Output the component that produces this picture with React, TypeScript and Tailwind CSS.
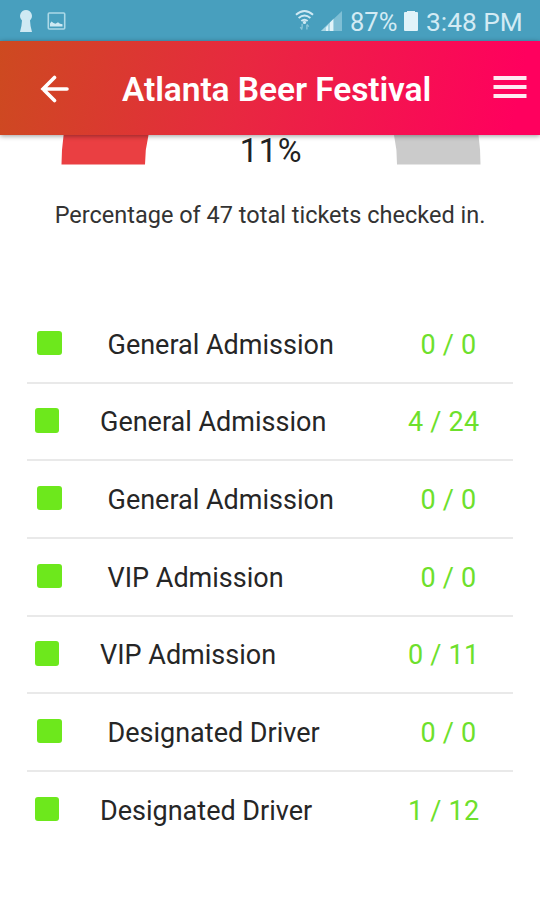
interface TicketRow {
  id: number;
  name: string;
  checkedIn: number;
  total: number;
}

const tickets: TicketRow[] = [
  { id: 1, name: "General Admission", checkedIn: 0, total: 0 },
  { id: 2, name: "General Admission", checkedIn: 4, total: 24 },
  { id: 3, name: "General Admission", checkedIn: 0, total: 0 },
  { id: 4, name: "VIP Admission", checkedIn: 0, total: 0 },
  { id: 5, name: "VIP Admission", checkedIn: 0, total: 11 },
  { id: 6, name: "Designated Driver", checkedIn: 0, total: 0 },
  { id: 7, name: "Designated Driver", checkedIn: 1, total: 12 },
];

function StatusBar() {
  return (
    <div className="flex h-[41px] shrink-0 items-center bg-[#489fbe] text-[#d3ebf4]">
      <svg className="ml-[19px] h-[24px] w-[14px]" viewBox="0 0 14 24" fill="#cfe9f3">
        <path d="M7 1a6 6 0 0 1 4 10.400Q11.200 17 13 23H1Q2.800 17 3 11.400A6 6 0 0 1 7 1Z" />
      </svg>
      <svg className="ml-[14px] h-[20px] w-[19px]" viewBox="0 0 19 20" fill="none">
        <rect x="1.3" y="2" width="16.4" height="16" rx="1" stroke="#acd9e7" strokeWidth="1.6" />
        <path d="M3 15.500v-3l1.500-2 2 1.500 2 .8 2.500-1.500 2 1.500 2.500.5v2.200Z" fill="#cfe9f3" />
      </svg>
      <div className="ml-auto flex items-center">
        <svg className="h-[24px] w-[19px]" viewBox="0 0 20 24" fill="none" stroke="#cfe9f3" strokeWidth="2">
          <path d="M1 5.500q9-8 18 0M3.800 8.800q6.200-5.400 12.400 0M6.700 12q3.300-2.800 6.600 0" />
          <path d="M7.500 15v5M5.500 18.500l2 2.500M12.500 21v-5M14.500 18l-2-2.500" stroke="#8dc7da" strokeWidth="1.4" />
          <circle cx="10" cy="13.5" r="1.7" fill="#cfe9f3" stroke="none" />
        </svg>
        <svg className="ml-[7px] h-[22px] w-[21px]" viewBox="0 0 21 22">
          <path d="M0 21 21 1v20Z" fill="#7fbfd5" />
          <path d="M0 21 13 8.600V21Z" fill="#a8d6e5" />
          <path d="M5 21v-3.500l2-2V21ZM9 21v-8.500l3-3V21Z" fill="#e1f3f9" />
        </svg>
        <span className="ml-[8px] w-[48px] pt-[3px] text-[25.500px] leading-[38px] whitespace-nowrap">
          87%
        </span>
        <svg className="ml-[6px] h-[22px] w-[14px]" viewBox="0 0 14 22" fill="#e1f3f9">
          <path d="M3 1h8v1h2a1 1 0 0 1 1 1v17a1 1 0 0 1-1 1H1a1 1 0 0 1-1-1V3a1 1 0 0 1 1-1h2Z" />
        </svg>
        <span className="ml-[8px] w-[114px] pt-[3px] text-[26.300px] leading-[38px] whitespace-nowrap">
          3:48 PM
        </span>
      </div>
    </div>
  );
}

function Header() {
  return (
    <header className="relative z-10 flex h-[94px] shrink-0 items-center bg-linear-[100deg] from-[#cd4a20] via-[#e82840] via-45% to-[#ff005e] to-95% shadow-[0_1px_5px_rgba(0,0,0,0.4)]">
      <svg
        className="mt-[2px] ml-[39px] h-[28px] w-[30px]"
        viewBox="0 0 30 28"
        fill="none"
        stroke="#fff"
        strokeWidth="3.6"
        strokeLinecap="round"
      >
        <path d="M28 14H4M15.500 2.500 4 14l11.500 11.500" />
      </svg>
      <h1 className="ml-[53px] w-[311px] pt-[3px] text-[33.600px] leading-10 font-semibold tracking-[-0.100px] whitespace-nowrap text-white">
        Atlanta Beer Festival
      </h1>
      <svg className="mb-[3px] ml-[60px] h-[24px] w-[34px]" viewBox="0 0 34 24" fill="#ffe9f1">
        <path d="M.5 1h33v4H.5zM.5 10h33v4H.5zM.5 19h33v4H.5z" />
      </svg>
    </header>
  );
}

// Lower end of the half-circle gauge that scrolls under the header.
function Gauge() {
  return (
    <div className="flex h-[30px] justify-between pr-[59px] pl-[61px]">
      <svg className="h-[30px] w-[88px]" viewBox="61 0 88 30">
        <path d="M61.5 29.5A209.5 209.5 0 0 1 63.6 0H148.5A126 126 0 0 0 145 29.5Z" fill="#ea3f42" />
      </svg>
      <span className="pt-[1px] text-[32.500px] leading-[30px] tracking-[0.800px] text-[#222]">
        11%
      </span>
      <svg className="h-[30px] w-[88px]" viewBox="393 0 88 30">
        <path d="M480.5 29.5A209.5 209.5 0 0 0 478.5 0H394A126 126 0 0 1 397 29.5Z" fill="#cbcbcb" />
      </svg>
    </div>
  );
}

function Ticket({ ticket }: { ticket: TicketRow }) {
  const wide = ticket.total > 9;

  return (
    <li
      className={`flex h-[77.67px] items-center border-b-2 border-[#e9e9e9] last:border-transparent ${
        wide ? "pl-[7.5px]" : "pl-[10px]"
      }`}
    >
      <span className="mb-[2px] size-[24.5px] shrink-0 rounded-[3px] bg-[#6de81c]" />
      <span
        className={`pt-[2px] text-[27px] whitespace-nowrap text-[#262626] ${
          wide ? "ml-[41px] w-[308px]" : "ml-[46px] w-[313px]"
        }`}
      >
        {ticket.name}
      </span>
      <span className="pt-[2px] text-[27px] tracking-[0.2px] whitespace-nowrap text-[#6de02c]">
        {ticket.checkedIn} / {ticket.total}
      </span>
    </li>
  );
}

export default function App() {
  return (
    <div className="flex h-[900px] w-[540px] flex-col overflow-hidden bg-white font-[Roboto,sans-serif]">
      <StatusBar />
      <Header />
      <main>
        <Gauge />
        <p className="mt-[35px] text-center text-[23.500px] leading-[30px] whitespace-nowrap text-[#333]">
          Percentage of 47 total tickets checked in.
        </p>
        <ul className="mx-[27px] mt-[76px]">
          {tickets.map((ticket) => (
            <Ticket key={ticket.id} ticket={ticket} />
          ))}
        </ul>
      </main>
    </div>
  );
}
